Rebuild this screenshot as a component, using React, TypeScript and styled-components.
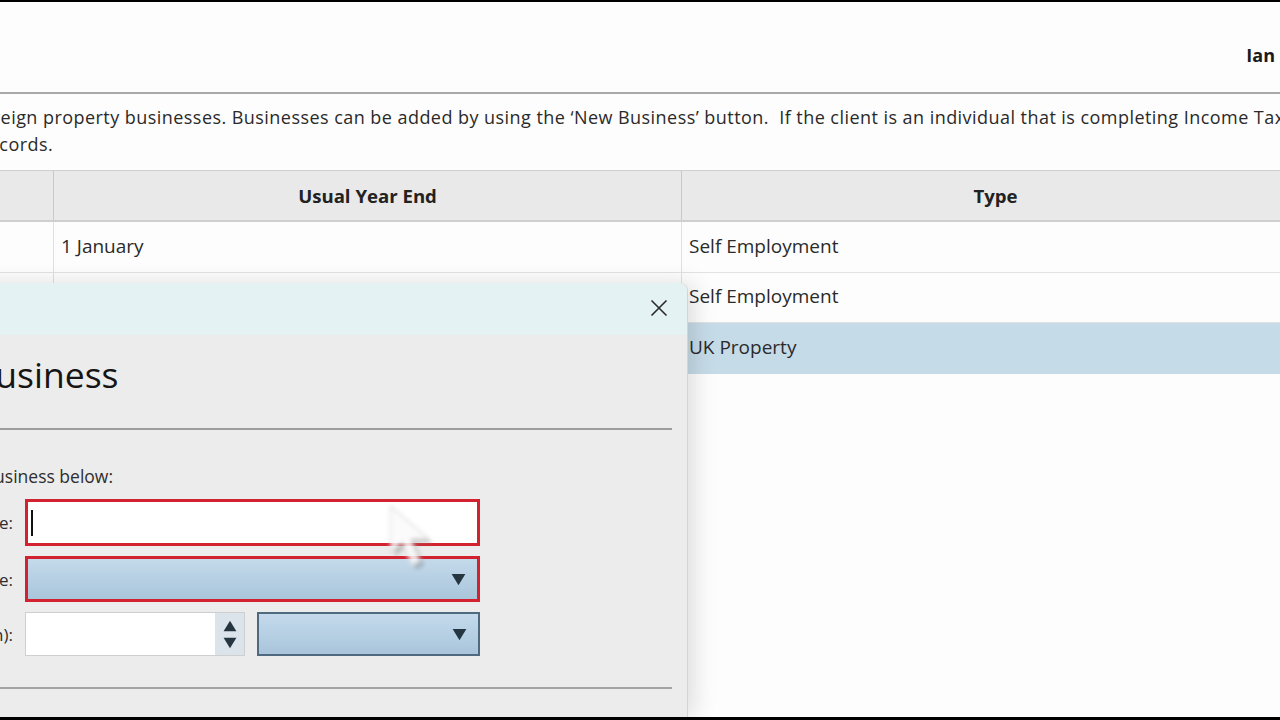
import { styled, createGlobalStyle } from 'styled-components';

const FONT = `'Open Sans', 'Noto Sans', 'Liberation Sans', sans-serif`;

const GlobalStyle = createGlobalStyle`
	html, body {
		margin: 0;
		padding: 0;
		background: #000;
	}
	body {
		font-family: ${FONT};
		color: #222;
	}
`;

const ROWS = [
	{ id: 1, yearEnd: '1 January', type: 'Self Employment' },
	{ id: 2, yearEnd: '', type: 'Self Employment' },
	{ id: 3, yearEnd: '', type: 'UK Property', selected: true },
];

const CloseIcon = () => (
	<svg width="18" height="18" viewBox="0 0 18 18">
		<path d="M1.5 1.5 L16.5 16.5 M16.5 1.5 L1.5 16.5" stroke="#2b2b2b" strokeWidth="1.6" fill="none" />
	</svg>
);

const Triangle = ({ up, size }: { up?: boolean; size: number }) => (
	<svg width={size} height={size} viewBox="0 0 12 12">
		<path d={up ? 'M6 1.5 L11.5 10.5 L0.5 10.5 Z' : 'M0.5 1.5 L11.5 1.5 L6 10.5 Z'} fill="#253641" />
	</svg>
);

const Pointer = () => (
	<svg width="64" height="74" viewBox="0 0 60 70">
		<path d="M6 4 L6 48 L17 38 L26 60 L34 56 L25 35 L42 35 Z" fill="#7d7d7d" opacity="0.5" transform="translate(4 4)" />
		<path d="M6 4 L6 48 L17 38 L26 60 L34 56 L25 35 L42 35 Z" fill="#fbfbfb" stroke="#cfcfcf" strokeWidth="1" />
	</svg>
);

const App = () => {
	return (
		<>
			<GlobalStyle />
			<Screen>
				<TopBar>
					<UserName>Ian</UserName>
				</TopBar>
				<Rule />
				<Description>
					foreign property businesses. Businesses can be added by using the ‘New Business’ button.&nbsp; If the client is an individual that is completing Income Tax Self Assessment returns
					<br />
					records.
				</Description>

				<Table>
					<HeaderRow>
						<HeaderCell>Name</HeaderCell>
						<HeaderCell>Usual Year End</HeaderCell>
						<HeaderCell>Type</HeaderCell>
					</HeaderRow>
					{ROWS.map((row) => (
						<Row key={row.id} $selected={row.selected}>
							<Cell />
							<Cell>{row.yearEnd}</Cell>
							<Cell>{row.type}</Cell>
						</Row>
					))}
				</Table>

				<Dialog>
					<DialogHeader>
						<CloseButton>
							<CloseIcon />
						</CloseButton>
					</DialogHeader>
					<DialogBody>
						<Title>New Business</Title>
						<Separator />
						<Intro>Please enter the details of the business below:</Intro>
						<Form>
							<Label>Business name:</Label>
							<TextInput $invalid>
								<Caret />
							</TextInput>

							<Label>Business type:</Label>
							<Combo $invalid $height={46}>
								<Triangle size={15} />
							</Combo>

							<Label>Usual year end (day/month):</Label>
							<DateRow>
								<DayInput>
									<Spinner>
										<Triangle up size={14} />
										<Triangle size={14} />
									</Spinner>
								</DayInput>
								<Combo $height={44}>
									<Triangle size={15} />
								</Combo>
							</DateRow>
						</Form>
						<BottomSeparator />
					</DialogBody>
				</Dialog>

				<Cursor>
					<Pointer />
				</Cursor>
			</Screen>
		</>
	);
};

const Screen = styled.div`
	position: relative;
	margin-top: 2px;
	height: 715px;
	width: 1280px;
	background: #fdfdfd;
	overflow: hidden;
	font-family: ${FONT};
`;

const TopBar = styled.div`
	height: 90px;
	display: flex;
	align-items: center;
	justify-content: flex-end;
	padding-right: 5px;
	box-sizing: border-box;
`;

const UserName = styled.span`
	font-weight: 700;
	font-size: 18px;
	color: #1a1a1a;
	margin-top: 16px;
`;

const Rule = styled.div`
	height: 2px;
	background: #a9a9a9;
`;

const Description = styled.p`
	margin: 10px 0 0 -19px;
	width: 1700px;
	font-size: 18px;
	letter-spacing: 0.45px;
	line-height: 27px;
	color: #2a2a2a;
	text-indent: -6px;
	white-space: nowrap;
`;

const Table = styled.div`
	margin-top: 12px;
	margin-left: -146px;
	border-top: 1px solid #cfcfcf;
`;

const HeaderRow = styled.div`
	display: grid;
	grid-template-columns: 200px 628px 628px;
	height: 51px;
	box-sizing: border-box;
	background: #e9e9e9;
	border-bottom: 2px solid #cfcfcf;
`;

const HeaderCell = styled.div`
	display: flex;
	align-items: center;
	justify-content: center;
	font-weight: 700;
	font-size: 18.6px;
	color: #222;
	border-right: 1px solid #c9c9c9;
`;

const Row = styled.div<{ $selected?: boolean }>`
	display: grid;
	grid-template-columns: 200px 628px 628px;
	height: 50.5px;
	box-sizing: border-box;
	background: ${(p) => (p.$selected ? '#c6dbe8' : '#fdfdfd')};
	border-bottom: 1px solid ${(p) => (p.$selected ? '#c6dbe8' : '#e2e2e2')};
`;

const Cell = styled.div`
	display: flex;
	align-items: center;
	padding: 0 0 2px 7px;
	font-size: 19px;
	color: #2a2a2a;
	border-right: 1px solid #e0e0e0;
`;

const Dialog = styled.div`
	position: absolute;
	top: 281px;
	left: -300px;
	width: 987px;
	bottom: 0;
	background: #ececec;
	border-top-right-radius: 8px;
	box-shadow: 1px 0 0 #d4d4d4, 8px 0 22px rgba(0, 0, 0, 0.12);
	display: flex;
	flex-direction: column;
`;

const DialogHeader = styled.div`
	height: 52px;
	background: #e4f2f3;
	border-top-right-radius: 8px;
	display: flex;
	align-items: center;
	justify-content: flex-end;
	padding-right: 19px;
	flex-shrink: 0;
`;

const CloseButton = styled.div`
	width: 18px;
	height: 18px;
	display: flex;
	margin-top: -2px;
`;

const DialogBody = styled.div`
	padding: 0 15px 0 56px;
	display: flex;
	flex-direction: column;
`;

const Title = styled.h1`
	margin: 15px 0 0 133px;
	font-size: 35.5px;
	line-height: 48px;
	font-weight: 400;
	color: #151515;
`;

const Separator = styled.div`
	margin-top: 30px;
	height: 2px;
	background: #9d9d9d;
`;

const Intro = styled.div`
	margin: 34px 0 0 -20px;
	font-size: 17.5px;
	line-height: 24px;
	color: #2e2e2e;
`;

const Form = styled.div`
	margin-top: 11px;
	display: grid;
	grid-template-columns: 257px 455px;
	column-gap: 12px;
	row-gap: 10px;
	align-items: center;
`;

const Label = styled.div`
	text-align: right;
	font-size: 17px;
	color: #2e2e2e;
	white-space: nowrap;
`;

const TextInput = styled.div<{ $invalid?: boolean }>`
	height: 47px;
	box-sizing: border-box;
	background: #fff;
	border: 3px solid ${(p) => (p.$invalid ? '#d3222f' : '#b9b9b9')};
	display: flex;
	align-items: center;
	padding-left: 3px;
`;

const Caret = styled.div`
	width: 1.5px;
	height: 26px;
	background: #111;
`;

const Combo = styled.div<{ $invalid?: boolean; $height: number }>`
	height: ${(p) => p.$height}px;
	box-sizing: border-box;
	border: ${(p) => (p.$invalid ? '3px solid #d3222f' : '2px solid #4f6a7e')};
	background: linear-gradient(to bottom, #c4daeb, #a9c5db);
	display: flex;
	align-items: center;
	justify-content: flex-end;
	padding-right: 11px;
	flex: 1;
`;

const DateRow = styled.div`
	display: flex;
	gap: 12px;
`;

const DayInput = styled.div`
	width: 220px;
	height: 44px;
	box-sizing: border-box;
	background: #fff;
	border: 1px solid #cfcfcf;
	display: flex;
	justify-content: flex-end;
`;

const Spinner = styled.div`
	width: 29px;
	background: #dbe4ea;
	display: flex;
	flex-direction: column;
	align-items: center;
	justify-content: center;
	gap: 3px;
`;

const BottomSeparator = styled.div`
	margin-top: 31px;
	height: 2px;
	background: #a3a3a3;
`;

const Cursor = styled.div`
	position: absolute;
	left: 384px;
	top: 500px;
	filter: blur(2px);
	opacity: 0.85;
`;

export default App;
